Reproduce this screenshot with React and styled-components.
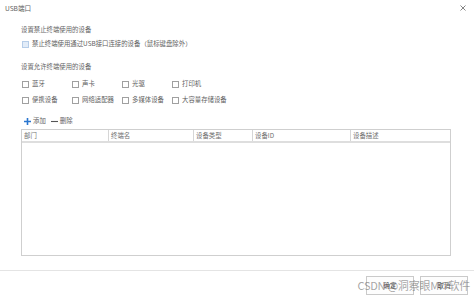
import React from "react";
import styled, { createGlobalStyle } from "styled-components";

const Global = createGlobalStyle`
  html, body { margin: 0; padding: 0; background: #fff; }
  body { font-family: "Noto Sans CJK SC", "Noto Sans", sans-serif; }
`;

const Dialog = styled.div`
  width: 474px;
  height: 298px;
  background: #fff;
  display: flex;
  flex-direction: column;
  overflow: hidden;
  color: #666;
  font-size: 6.4px;
`;

const TitleBar = styled.div`
  height: 16px;
  display: flex;
  align-items: center;
  justify-content: space-between;
  padding: 0 8px 0 5px;
`;

const Title = styled.span`
  font-size: 6.6px;
  color: #606060;
  line-height: 10px;
`;

const CloseBtn = styled.svg`
  width: 6px;
  height: 6px;
  display: block;
`;

const Body = styled.div`
  flex: 1;
  display: flex;
  flex-direction: column;
  padding: 0 24px 0 21px;
`;

const Heading = styled.div`
  line-height: 10px;
  margin-top: ${(p) => p.$mt}px;
  color: #666;
`;

const Check = styled.label`
  display: flex;
  align-items: center;
  gap: 3px;
  line-height: 10px;
  white-space: nowrap;
  color: #626262;
`;

const Box = styled.span`
  width: 7px;
  height: 7px;
  box-sizing: border-box;
  border: 1px solid ${(p) => (p.$tinted ? "#b6cde8" : "#a0a0a0")};
  background: ${(p) => (p.$tinted ? "#e2ecf8" : "#fff")};
  flex: none;
`;

const SingleRow = styled.div`
  margin-top: ${(p) => p.$mt}px;
  padding-left: 1px;
`;

const CheckGrid = styled.div`
  display: grid;
  grid-template-columns: repeat(4, 50px);
  row-gap: 6px;
  margin-top: 7px;
  padding-left: 1px;
`;

const Toolbar = styled.div`
  display: flex;
  align-items: center;
  gap: 5px;
  margin-top: 11px;
  padding-left: 3px;
  line-height: 10px;
`;

const ToolBtn = styled.span`
  display: flex;
  align-items: center;
  gap: 2px;
  color: #626262;
`;

const Icon = styled.svg`
  width: 7px;
  height: 7px;
  display: block;
`;

const Table = styled.div`
  margin-top: 3px;
  height: 127px;
  width: 430px;
  box-sizing: border-box;
  border: 1px solid #cfcfcf;
  display: flex;
  flex-direction: column;
`;

const HeaderRow = styled.div`
  display: grid;
  grid-template-columns: 86px 85px 59px 98px 1fr;
  height: 13px;
  box-sizing: border-box;
  border-bottom: 2px solid #dedede;
`;

const HeaderCell = styled.div`
  padding-left: 2px;
  display: flex;
  align-items: center;
  color: #707070;
  border-left: ${(p) => (p.$first ? "none" : "1px solid #d6d6d6")};
`;

const Footer = styled.div`
  position: relative;
  margin-top: 14px;
  border-top: 1px solid #e4e4e4;
  padding: 5px 6px 3px 0;
  display: flex;
  justify-content: flex-end;
  gap: 6px;
`;

const Button = styled.button`
  width: 48px;
  height: 19px;
  box-sizing: border-box;
  border: 1px solid #cacaca;
  background: #fdfdfd;
  font-family: inherit;
  font-size: 6.4px;
  color: #444;
  padding: 0;
`;

const Watermark = styled.div`
  position: absolute;
  right: 4px;
  top: 6px;
  font-size: 11px;
  line-height: 16px;
  letter-spacing: -0.2px;
  color: rgba(110, 110, 110, 0.62);
  white-space: nowrap;
  pointer-events: none;
`;

const allowRow1 = ["蓝牙", "声卡", "光驱", "打印机"];
const allowRow2 = ["便携设备", "网络适配器", "多媒体设备", "大容量存储设备"];
const columns = ["部门", "终端名", "设备类型", "设备ID", "设备描述"];

export default function App() {
  return (
    <>
      <Global />
      <Dialog>
        <TitleBar>
          <Title>USB端口</Title>
          <CloseBtn viewBox="0 0 6 6">
            <path d="M0.5 0.5 L5.5 5.5 M5.5 0.5 L0.5 5.5" stroke="#666" strokeWidth="0.8" />
          </CloseBtn>
        </TitleBar>
        <Body>
          <Heading $mt={9}>设置禁止终端使用的设备</Heading>
          <SingleRow $mt={4}>
            <Check>
              <Box $tinted />
              禁止终端使用通过USB接口连接的设备（鼠标键盘除外）
            </Check>
          </SingleRow>
          <Heading $mt={13}>设置允许终端使用的设备</Heading>
          <CheckGrid>
            {[...allowRow1, ...allowRow2].map((t) => (
              <Check key={t}>
                <Box />
                {t}
              </Check>
            ))}
          </CheckGrid>
          <Toolbar>
            <ToolBtn>
              <Icon viewBox="0 0 7 7">
                <path d="M3.5 0 V7 M0 3.5 H7" stroke="#2a76cf" strokeWidth="1.6" />
              </Icon>
              添加
            </ToolBtn>
            <ToolBtn>
              <Icon viewBox="0 0 7 7">
                <path d="M0 3.5 H7" stroke="#555" strokeWidth="1.1" />
              </Icon>
              删除
            </ToolBtn>
          </Toolbar>
          <Table>
            <HeaderRow>
              {columns.map((c, i) => (
                <HeaderCell key={c} $first={i === 0}>
                  {c}
                </HeaderCell>
              ))}
            </HeaderRow>
          </Table>
        </Body>
        <Footer>
          <Button>确定</Button>
          <Button>取消</Button>
          <Watermark>CSDN @洞察眼MIT软件</Watermark>
        </Footer>
      </Dialog>
    </>
  );
}
